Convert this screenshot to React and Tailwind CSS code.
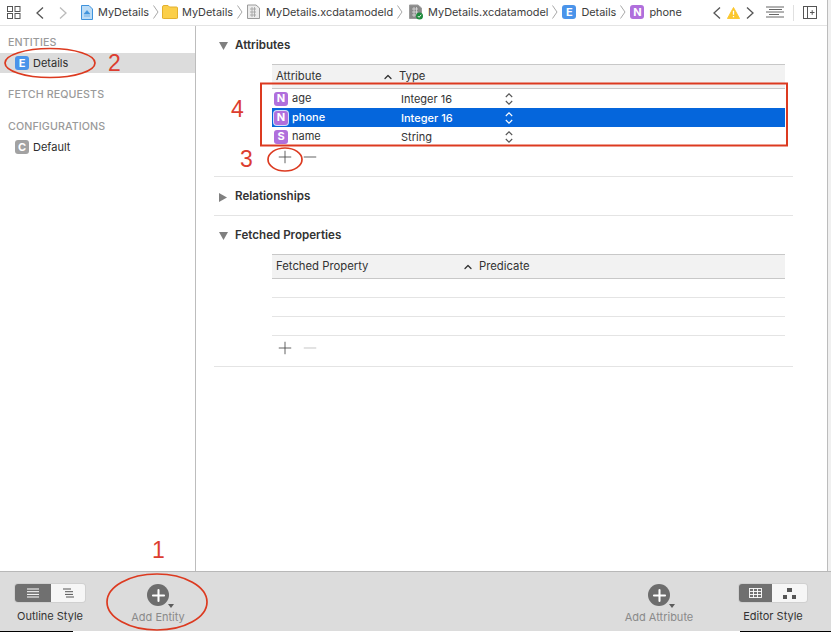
import { Plus, Minus, ChevronUp } from 'lucide-react'

const FONT = "font-['Inter','Liberation_Sans',sans-serif]"

function Badge({ letter, color = 'bg-[#b06fdc]', outline }) {
  return (
    <span className={`w-[14px] h-[14px] shrink-0 rounded-[3px] flex items-center justify-center text-white text-[11px] font-bold leading-none ${color} ${outline ? 'ring-1 ring-[#cfe0fa]' : ''}`}>
      {letter}
    </span>
  )
}

function Crumb({ icon, label, last, sep = 'mr-[4px]', gap = 'ml-[5px]' }) {
  return (
    <div className="flex items-center shrink-0">
      {icon}
      <span className={`text-[10.9px] text-[#3c3c3c] ${gap}`}>{label}</span>
      {!last && (
        <svg width="6" height="14" viewBox="0 0 6 14" className={`ml-[4px] ${sep}`} fill="none" stroke="#a8a8a8">
          <path d="M0.5 0.5 L5 7 L0.5 13.5" />
        </svg>
      )}
    </div>
  )
}

function NavArrow({ dir, color, className }) {
  return (
    <svg width="8" height="12" viewBox="0 0 8 12" className={className} fill="none" stroke={color} strokeWidth="1.3">
      <path d={dir === 'left' ? 'M7 0.5 L1 6 L7 11.5' : 'M1 0.5 L7 6 L1 11.5'} />
    </svg>
  )
}

function FileIcon() {
  return (
    <svg width="12" height="15" viewBox="0 0 12 15">
      <path d="M0.5 0.5 H8 L11.5 4 V14.5 H0.5 Z" fill="#bcdcf6" stroke="#3f93dc" />
      <path d="M3 9 L6 5.5 L9 9 Z M3 11 H9" fill="#3f93dc" stroke="#3f93dc" strokeWidth="0.6" />
    </svg>
  )
}

function FolderIcon() {
  return (
    <svg width="16" height="14" viewBox="0 0 16 14">
      <path d="M0.5 2 Q0.5 0.5 2 0.5 H6 L7.5 2 H14.5 Q15.5 2 15.5 3 V13 Q15.5 13.5 14.5 13.5 H1.5 Q0.5 13.5 0.5 13 Z" fill="#fbcf4a" stroke="#e3b02f" />
    </svg>
  )
}

function ModelIcon({ check }) {
  return (
    <svg width="14" height="16" viewBox="0 0 14 16">
      <path d="M0.5 1 H9 L12.5 4 V14.5 H0.5 Z" fill={check ? '#8a8a8a' : '#ececec'} stroke="#9b9b9b" />
      <path d="M3 5 H9 M3 8 H9 M3 11 H9 M5 3 V13 M7.5 3 V13" stroke={check ? '#dcdcdc' : '#a0a0a0'} strokeWidth="0.8" />
      {check && <circle cx="10.5" cy="12" r="3.5" fill="#1f8a3d" />}
      {check && <path d="M8.8 12 L10 13.3 L12.2 10.8" fill="none" stroke="#fff" strokeWidth="0.9" />}
    </svg>
  )
}

function TopBar() {
  return (
    <div className="h-[26px] shrink-0 border-b border-[#e4e4e4] flex items-center bg-white">
      <svg width="14" height="14" viewBox="0 0 14 14" className="ml-[7px]" fill="none" stroke="#555">
        <rect x="0.5" y="0.5" width="5" height="5" />
        <rect x="8" y="0.5" width="5" height="5" />
        <rect x="0.5" y="7.5" width="5" height="5" />
        <rect x="8" y="7.5" width="5" height="5" />
      </svg>
      <NavArrow dir="left" color="#555" className="ml-[15px]" />
      <NavArrow dir="right" color="#bbb" className="ml-[15px] mr-[14px]" />
      <Crumb icon={<FileIcon />} label="MyDetails" sep="mr-[3px]" />
      <Crumb icon={<FolderIcon />} label="MyDetails" gap="ml-[4px]" />
      <Crumb icon={<ModelIcon />} label="MyDetails.xcdatamodeld" sep="mr-[6px]" />
      <Crumb icon={<ModelIcon check />} label="MyDetails.xcdatamodel" />
      <Crumb icon={<Badge letter="E" color="bg-[#4a94ea]" />} label="Details" />
      <Crumb icon={<Badge letter="N" />} label="phone" last />
      <div className="ml-auto flex items-center mr-[10px]">
        <NavArrow dir="left" color="#555" />
        <svg width="13" height="12" viewBox="0 0 14 13" className="ml-[6px] mr-[6px]">
          <path d="M7 0.5 L13.6 12.5 H0.4 Z" fill="#fbc72e" stroke="#fbc72e" strokeLinejoin="round" />
          <path d="M7 4 V8.5 M7 9.8 V11" stroke="#fff" strokeWidth="1.4" />
        </svg>
        <NavArrow dir="right" color="#555" />
        <svg width="18" height="13" viewBox="0 0 18 13" className="ml-[12px]" stroke="#555" strokeWidth="0.9">
          <path d="M0 1 H18 M3 3.5 H16 M0 6 H18 M3 8.5 H13 M0 11 H18" />
        </svg>
        <div className="w-px h-[16px] bg-[#e0e0e0] mx-[9px]" />
        <svg width="14" height="14" viewBox="0 0 14 14" fill="none" stroke="#555">
          <rect x="0.5" y="0.5" width="13" height="12" />
          <path d="M4.5 0.5 V12.5 M7 6.5 H11.5 M9.2 4.2 V8.8" />
        </svg>
      </div>
    </div>
  )
}

function SideHeading({ children, className }) {
  return <div className={`pl-[8px] text-[10.7px] font-medium tracking-[0.1px] text-[#9a9a9a] leading-[10px] ${className}`}>{children}</div>
}

function Sidebar() {
  return (
    <aside className="w-[196px] shrink-0 border-r border-[#bdbdbd] pt-[12px]">
      <SideHeading>ENTITIES</SideHeading>
      <div className="mt-[5px] h-[20px] bg-[#dcdcdc] flex items-center pl-[15px] gap-[4px] text-[11px] text-[#2d2d2d]">
        <Badge letter="E" color="bg-[#4a94ea]" />
        Details
      </div>
      <SideHeading className="mt-[17px]">FETCH REQUESTS</SideHeading>
      <SideHeading className="mt-[22px]">CONFIGURATIONS</SideHeading>
      <div className="mt-[8px] h-[14px] flex items-center pl-[15px] gap-[4px] text-[11px] text-[#2d2d2d]">
        <Badge letter="C" color="bg-[#a2a2a2]" />
        Default
      </div>
    </aside>
  )
}

function SectionHead({ title, open }) {
  return (
    <div className="flex items-center h-[14px] text-[11.6px] font-semibold text-[#333]">
      <span className="w-[21px] flex justify-start pl-[5px]">
        {open ? (
          <svg width="9" height="8" viewBox="0 0 9 8"><path d="M0 0 H9 L4.5 8 Z" fill="#808080" /></svg>
        ) : (
          <svg width="8" height="9" viewBox="0 0 8 9"><path d="M0 0 L8 4.5 L0 9 Z" fill="#808080" /></svg>
        )}
      </span>
      {title}
    </div>
  )
}

function TableHeader({ left, right, split }) {
  return (
    <div className="flex items-center h-[25px] bg-[#f2f2f2] border-y border-[#c8c8c8] text-[11.3px] text-[#333] pl-[4px]">
      <span style={{ width: split }}>{left}</span>
      <ChevronUp size={12} strokeWidth={2.6} className="text-[#333] mr-[5px]" />
      {right}
    </div>
  )
}

function UpDown({ color }) {
  return (
    <svg width="8" height="12" viewBox="0 0 8 12" fill="none" stroke={color} strokeWidth="1.1">
      <path d="M0.8 4 L4 0.8 L7.2 4 M0.8 8 L4 11.2 L7.2 8" />
    </svg>
  )
}

function AttrRow({ letter, name, selected }) {
  return (
    <div className={`flex items-center h-[19px] pl-[2px] text-[11px] ${selected ? 'bg-[#0566dc] text-white font-medium' : 'text-[#333]'}`}>
      <Badge letter={letter} outline={selected} />
      <span className="ml-[4px] w-[109px]">{name}</span>
      <span className="w-[104px] pt-[1px]">{letter === 'N' ? 'Integer 16' : 'String'}</span>
      <UpDown color={selected ? '#fff' : '#555'} />
    </div>
  )
}

function AddRemove({ minusClass }) {
  return (
    <div className="flex items-center gap-[5px] pl-[3px]">
      <Plus size={20} strokeWidth={1} className="text-[#444]" />
      <Minus size={20} strokeWidth={1} className={minusClass} />
    </div>
  )
}

function Details() {
  return (
    <main className="flex-1 pl-[18px] pr-[34px]">
      <div className="pt-[13px] h-[119px]">
        <SectionHead title="Attributes" open />
        <div className="ml-[58px] mt-[11px] mr-[8px]">
          <TableHeader left="Attribute" right="Type" split={106} />
          <AttrRow letter="N" name="age" />
          <AttrRow letter="N" name="phone" selected />
          <AttrRow letter="S" name="name" />
        </div>
      </div>
      <div className="ml-[58px] h-[24px] mb-[7px] flex items-center">
        <AddRemove minusClass="text-[#444]" />
      </div>
      <div className="border-t border-[#e4e4e4] h-[39px] pt-[2px] flex items-center">
        <SectionHead title="Relationships" />
      </div>
      <div className="border-t border-[#e4e4e4] pt-[13px]">
        <SectionHead title="Fetched Properties" open />
        <div className="ml-[58px] mt-[11px] mr-[8px]">
          <TableHeader left="Fetched Property" right="Predicate" split={186} />
          <div className="h-[19px] border-b border-[#e4e4e4]" />
          <div className="h-[19px] border-b border-[#e4e4e4]" />
          <div className="h-[19px] border-b border-[#e4e4e4]" />
          <div className="h-[24px] flex items-center">
            <AddRemove minusClass="text-[#bbb]" />
          </div>
        </div>
      </div>
      <div className="border-t border-[#e4e4e4] mt-[6px]" />
    </main>
  )
}

function Segmented({ first, second, wide }) {
  return (
    <div className={`flex h-[18px] rounded-[3px] overflow-hidden shadow-[0_0_0_1px_#d0d0d0] ${wide ? 'w-[70px]' : 'w-[68px]'}`}>
      <div className={`bg-[#707070] flex items-center justify-center ${wide ? 'w-[36px]' : 'w-[33px]'}`}>{first}</div>
      <div className="flex-1 bg-[#f6f6f6] flex items-center justify-center">{second}</div>
    </div>
  )
}

function AddButton({ label }) {
  return (
    <div className="flex flex-col items-center w-[76px]">
      <div className="relative w-[22px] h-[22px] rounded-full bg-[#6d6d6d] flex items-center justify-center">
        <Plus size={19} strokeWidth={2.6} className="text-white" />
        <svg width="6" height="4" viewBox="0 0 6 4" className="absolute -right-[5px] bottom-[-2px]"><path d="M0 0 H6 L3 4 Z" fill="#5c5c5c" /></svg>
      </div>
      <span className="mt-[6px] text-[11px] text-[#8a8a8a] leading-none whitespace-nowrap">{label}</span>
    </div>
  )
}

function Footer() {
  return (
    <footer className="h-[60px] shrink-0 bg-[#dcdcdc] border-t border-[#b8b8b8] flex items-start pt-[12px]">
      <div className="ml-[15px] w-[70px] flex flex-col items-center">
        <Segmented
          wide
          first={
            <svg width="12" height="10" viewBox="0 0 12 10" stroke="#fff"><path d="M0 1 H12 M0 3.7 H12 M0 6.4 H12 M0 9 H12" /></svg>
          }
          second={
            <svg width="11" height="10" viewBox="0 0 11 10" stroke="#555"><path d="M0 1 H8 M2 3.7 H10 M2 6.4 H10 M3 9 H11" /></svg>
          }
        />
        <span className="mt-[9px] text-[11px] text-[#333] leading-none whitespace-nowrap">Outline Style</span>
      </div>
      <div className="ml-[35px]"><AddButton label="Add Entity" /></div>
      <div className="ml-auto"><AddButton label="Add Attribute" /></div>
      <div className="ml-[42px] mr-[24px] w-[68px] flex flex-col items-center">
        <Segmented
          first={
            <svg width="13" height="10" viewBox="0 0 13 10" fill="none" stroke="#fff" strokeWidth="0.9"><rect x="0.5" y="0.5" width="12" height="9" /><path d="M0.5 3.5 H12.5 M0.5 6.5 H12.5 M4.5 0.5 V9.5 M8.5 0.5 V9.5" /></svg>
          }
          second={
            <svg width="13" height="11" viewBox="0 0 13 11" fill="#555"><rect x="4" y="0" width="5" height="4" /><rect x="0" y="7" width="4" height="4" /><rect x="9" y="7" width="4" height="4" /></svg>
          }
        />
        <span className="mt-[9px] text-[11px] text-[#333] leading-none whitespace-nowrap">Editor Style</span>
      </div>
    </footer>
  )
}

// red markup drawn on top of the screenshot
function Annotations() {
  const num = "absolute text-[23px] leading-none text-[#dc3d30] font-['Liberation_Sans',sans-serif]"
  return (
    <>
      <svg width="831" height="632" className="absolute inset-0 pointer-events-none" fill="none" stroke="#dc3a20" strokeWidth="1.7">
        <ellipse cx="50" cy="63" rx="45" ry="14.5" />
        <rect x="261" y="83.5" width="526" height="62" strokeWidth="2" />
        <ellipse cx="285" cy="159.5" rx="17" ry="11.5" />
        <ellipse cx="157" cy="602" rx="50" ry="28" />
      </svg>
      <span className={`${num} left-[108px] top-[52px]`}>2</span>
      <span className={`${num} left-[231px] top-[98px]`}>4</span>
      <span className={`${num} left-[240px] top-[148px]`}>3</span>
      <span className={`${num} left-[152px] top-[539px]`}>1</span>
    </>
  )
}

export default function App() {
  return (
    <div className={`relative w-[831px] h-[632px] overflow-hidden bg-white flex flex-col ${FONT}`}>
      <div className="flex-1 flex min-h-0">
        <div className="flex-1 flex flex-col min-w-0">
          <TopBar />
          <div className="flex-1 flex min-h-0">
            <Sidebar />
            <Details />
          </div>
        </div>
        <div className="w-[4px] shrink-0 bg-[#f0f0f0] border-l border-[#bcbcbc]" />
      </div>
      <Footer />
      <div className="h-px shrink-0 flex justify-between">
        <div className="w-[73px] bg-black" />
        <div className="w-[91px] bg-black" />
      </div>
      <Annotations />
    </div>
  )
}
